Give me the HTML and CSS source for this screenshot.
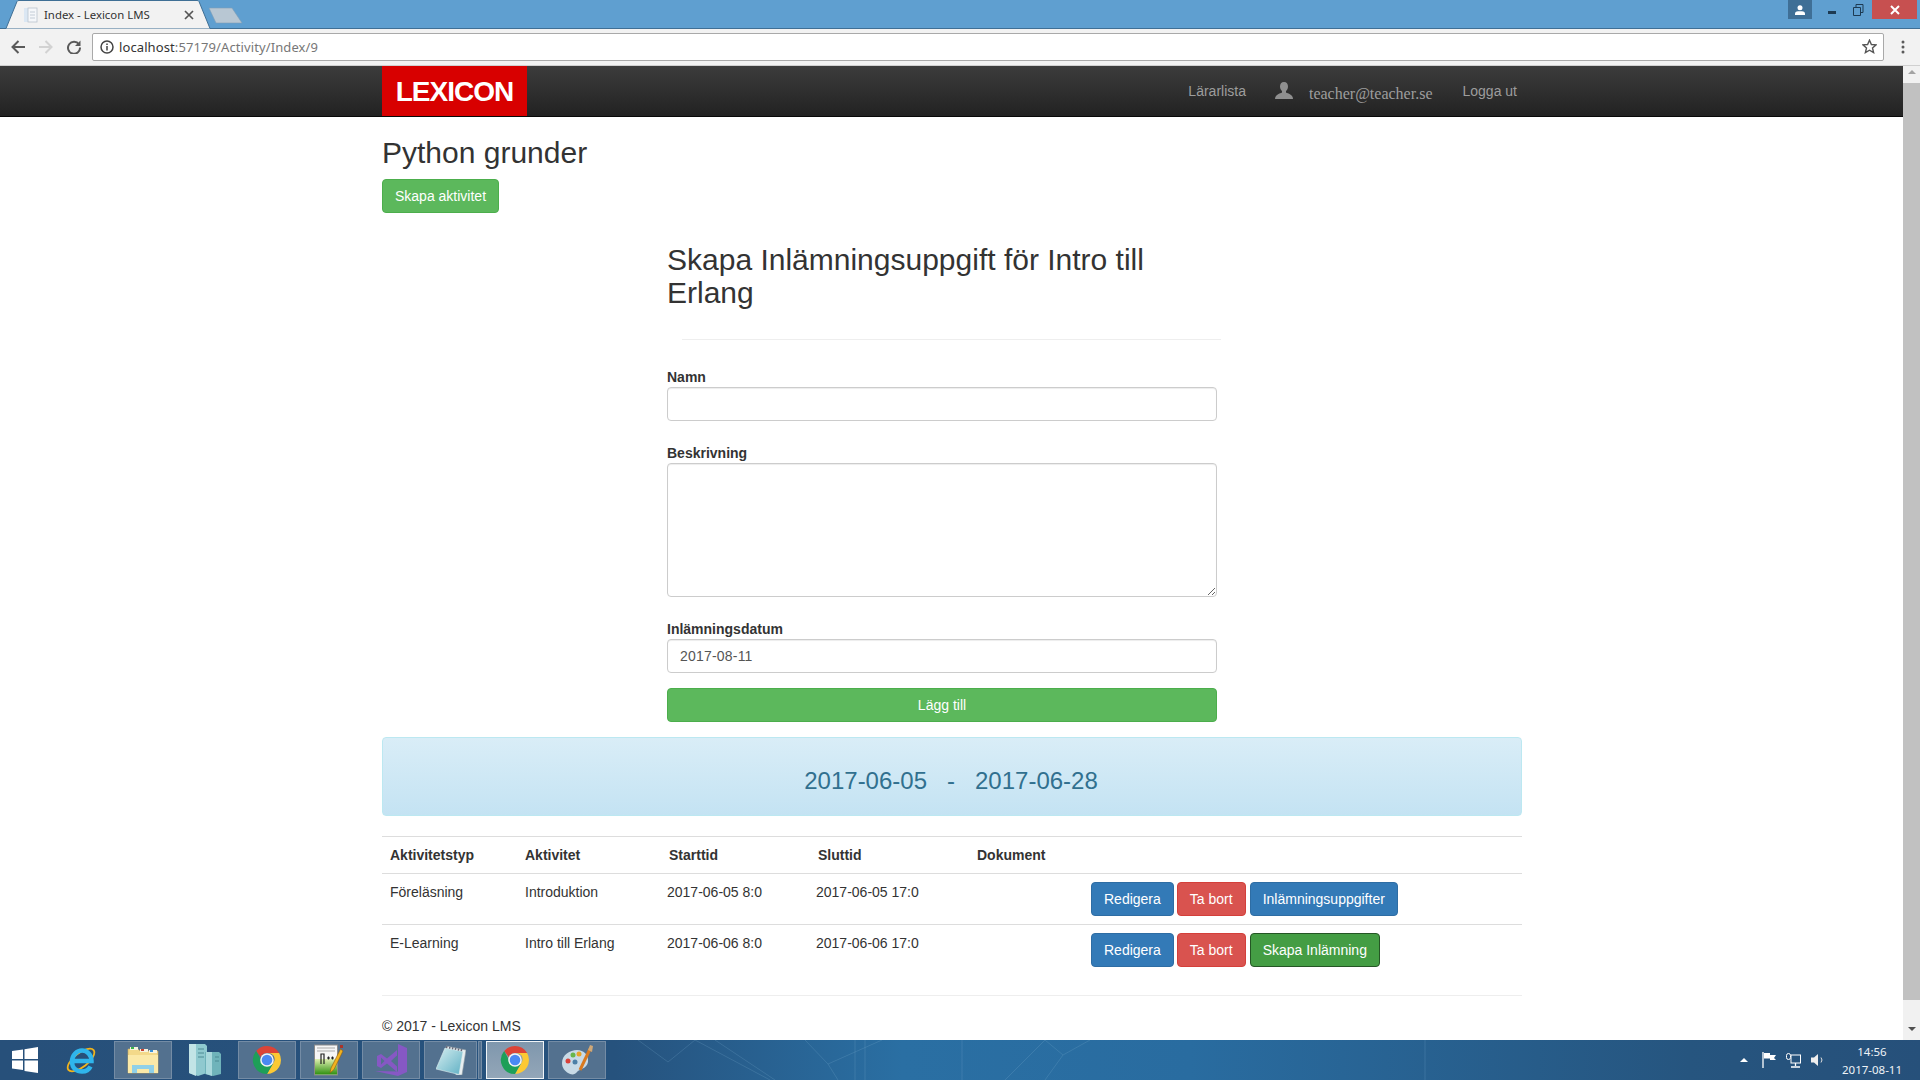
FILE: index.html
```html
<!DOCTYPE html>
<html lang="en">
<head>
    <meta charset="UTF-8">
    <title>Index - Lexicon LMS</title>
    <link rel="stylesheet" href="styles.css">
</head>
<body>
    <svg class="icon-defs" width="0" height="0">
        <defs>
            <linearGradient id="npp-green" x1="0" y1="0" x2="0" y2="1">
                <stop offset="0" stop-color="#dff0b0"/>
                <stop offset="1" stop-color="#2f9010"/>
            </linearGradient>
            <linearGradient id="pad-blue" x1="0" y1="0" x2="1" y2="1">
                <stop offset="0" stop-color="#d6eef0"/>
                <stop offset="1" stop-color="#5fb0c4"/>
            </linearGradient>
        </defs>
        <symbol id="chrome" viewBox="0 0 30 30">
            <path d="M15 1a14 14 0 0 1 12.100 7H15a7 7 0 0 0-6.300 4L4.200 6A14 14 0 0 1 15 1z" fill="#dc4437"/>
            <path d="M27.100 8A14 14 0 0 1 15 29l6-10.500A7 7 0 0 0 21.500 10.500 7 7 0 0 0 15 8z" fill="#fcc934"/>
            <path d="M4.200 6l6.200 11.500A7 7 0 0 0 21 18.500L15 29A14 14 0 0 1 4.200 6z" fill="#1e9f58"/>
            <circle cx="15" cy="15" r="6.800" fill="#f4f4f4"/>
            <circle cx="15" cy="15" r="5.300" fill="#4a89f3"/>
        </symbol>
    </svg>

    <div class="tabstrip">
        <div class="tab">
            <svg class="tab-shape" width="250" height="29" viewBox="0 0 250 29">
                <path d="M6 28.500L17 1.500Q17.500 .5 19 .5H197Q198.500 .5 199 1.500L210 28.500" fill="#f2f2f2" stroke="#3f6f95"/>
                <path d="M209 8H232L242 23H216z" fill="#b8c7d3" stroke="#7f9db6" stroke-width=".6"/>
            </svg>
            <svg class="tab-favicon" width="14" height="16" viewBox="0 0 14 16">
                <rect x="0" y="1" width="5" height="14" fill="#dbe7f3"/>
                <rect x="4" y="1" width="9" height="14" fill="#f5f7fa" stroke="#b9c3cd" stroke-width=".8"/>
                <path d="M6 5h5M6 8h5M6 11h5" stroke="#c3ccd6"/>
            </svg>
            <span class="tab-title">Index - Lexicon LMS</span>
            <svg class="tab-close" width="10" height="10" viewBox="0 0 10 10">
                <path d="M1 1l8 8M9 1l-8 8" stroke="#555" stroke-width="1.700"/>
            </svg>
        </div>
        <div class="window-controls">
            <div class="profile-btn">
                <svg width="10" height="10" viewBox="0 0 10 10"><circle cx="5" cy="2.800" r="2.500" fill="#fff"/><path d="M0 10V8.500Q0 6.500 3 6.200H7Q10 6.500 10 8.500V10z" fill="#fff"/></svg>
            </div>
            <svg class="win-btn" width="30" height="19" viewBox="0 0 30 19"><rect x="16" y="11" width="8" height="3" fill="#1d3a52"/></svg>
            <svg class="win-btn" width="30" height="19" viewBox="0 0 30 19"><path d="M11.500 7.500h7v8h-7zM14 7V4.500h7v8h-2" fill="none" stroke="#1d3a52"/></svg>
            <div class="close-btn">
                <svg width="10" height="10" viewBox="0 0 10 10"><path d="M1 1l8 8M9 1l-8 8" stroke="#fff" stroke-width="2"/></svg>
            </div>
        </div>
    </div>

    <div class="toolbar">
        <svg class="tool-icon" width="14" height="14" viewBox="0 0 14 14"><path d="M14 7H2M7.500 1L1.500 7l6 6" fill="none" stroke="#5a5a5a" stroke-width="2"/></svg>
        <svg class="tool-icon" width="14" height="14" viewBox="0 0 14 14"><path d="M0 7h12M6.500 1l6 6-6 6" fill="none" stroke="#d2d2d2" stroke-width="2"/></svg>
        <svg class="tool-icon" width="14" height="14" viewBox="0 0 14 14"><path d="M12 4.500A6 6 0 1 0 13 7.500" fill="none" stroke="#5a5a5a" stroke-width="2"/><path d="M13.500 .5V6H8z" fill="#5a5a5a"/></svg>
        <div class="address-bar">
            <svg class="info-icon" width="14" height="14" viewBox="0 0 14 14"><circle cx="7" cy="7" r="6" fill="none" stroke="#444" stroke-width="1.500"/><path d="M7 6v4.500M7 3.500v1.500" stroke="#444" stroke-width="1.500"/></svg>
            <span class="url"><span class="url-host">localhost</span>:57179/Activity/Index/9</span>
            <svg class="star-icon" width="15" height="15" viewBox="0 0 15 15"><path d="M7.500 1.200l1.900 4.300 4.700.4-3.600 3.100 1.100 4.600-4.100-2.400-4.100 2.400 1.100-4.600L.9 5.900l4.700-.4z" fill="none" stroke="#555" stroke-width="1.400"/></svg>
        </div>
        <svg class="menu-icon" width="4" height="14" viewBox="0 0 4 14"><circle cx="2" cy="2" r="1.500" fill="#5a5a5a"/><circle cx="2" cy="7" r="1.500" fill="#5a5a5a"/><circle cx="2" cy="12" r="1.500" fill="#5a5a5a"/></svg>
    </div>

    <div class="browser-view">
        <div class="site">
            <div class="navbar">
                <div class="logo">LEXICON</div>
                <div class="nav-links">
                    <a class="nav-link">Lärarlista</a>
                    <svg class="nav-user" width="18" height="17" viewBox="0 0 18 17"><path d="M9 0c2.700 0 4 2 4 4.500 0 2-1 3.700-2 4.500v1.500c2 1 7 2 7 6.500H0c0-4.500 5-5.500 7-6.500V9C6 8.200 5 6.500 5 4.500 5 2 6.300 0 9 0z" fill="#8f8f8f"/></svg>
                    <a class="nav-email">teacher@teacher.se</a>
                    <a class="nav-link">Logga ut</a>
                </div>
            </div>

            <div class="container">
                <h2 class="page-title">Python grunder</h2>
                <a class="btn btn-success">Skapa aktivitet</a>

                <div class="assignment-form">
                    <h2 class="form-title">Skapa Inlämningsuppgift för Intro till Erlang</h2>
                    <hr class="form-rule">
                    <div class="form-group">
                        <label>Namn</label>
                        <input class="form-control" type="text">
                    </div>
                    <div class="form-group">
                        <label>Beskrivning</label>
                        <textarea class="form-control description"></textarea>
                    </div>
                    <div class="form-group">
                        <label>Inlämningsdatum</label>
                        <input class="form-control date-input" type="text" value="2017-08-11">
                    </div>
                    <a class="btn btn-success btn-block">Lägg till</a>
                </div>

                <div class="period-banner">2017-06-05 &nbsp; - &nbsp; 2017-06-28</div>

                <table class="activity-table">
                    <colgroup>
                        <col class="col-type">
                        <col class="col-name">
                        <col class="col-start">
                        <col class="col-end">
                        <col class="col-doc">
                        <col>
                    </colgroup>
                    <thead>
                        <tr>
                            <th>Aktivitetstyp</th>
                            <th>Aktivitet</th>
                            <th>Starttid</th>
                            <th>Sluttid</th>
                            <th>Dokument</th>
                            <th></th>
                        </tr>
                    </thead>
                    <tbody>
                        <tr>
                            <td>Föreläsning</td>
                            <td>Introduktion</td>
                            <td class="time-cell">2017-06-05 8:0</td>
                            <td class="time-cell">2017-06-05 17:0</td>
                            <td></td>
                            <td>
                                <div class="row-actions">
                                    <a class="btn btn-primary">Redigera</a>
                                    <a class="btn btn-danger">Ta bort</a>
                                    <a class="btn btn-primary">Inlämningsuppgifter</a>
                                </div>
                            </td>
                        </tr>
                        <tr>
                            <td>E-Learning</td>
                            <td>Intro till Erlang</td>
                            <td class="time-cell">2017-06-06 8:0</td>
                            <td class="time-cell">2017-06-06 17:0</td>
                            <td></td>
                            <td>
                                <div class="row-actions">
                                    <a class="btn btn-primary">Redigera</a>
                                    <a class="btn btn-danger">Ta bort</a>
                                    <a class="btn btn-success-active">Skapa Inlämning</a>
                                </div>
                            </td>
                        </tr>
                    </tbody>
                </table>

                <hr class="footer-rule">
                <p class="footer-text">© 2017 - Lexicon LMS</p>
            </div>
        </div>

        <div class="scrollbar">
            <div class="arrow-up"></div>
            <div class="scroll-thumb"></div>
            <div class="arrow-down"></div>
        </div>
    </div>

    <div class="taskbar">
        <svg class="taskbar-art" width="1000" height="40" viewBox="0 0 1000 40">
            <g fill="none" stroke="#7fb3d3" stroke-opacity=".22">
                <path d="M18 0L48 22 75 0M75 0L150 40M95 0L155 40M185 0L208 24 262 0M208 24L218 40M235 0V40M245 0V40M342 0V40"/>
                <path d="M425 0L443 15 470 0M425 40L443 15M385 40L425 0M805 0V40"/>
            </g>
        </svg>
        <div class="start-btn">
            <svg width="28" height="26" viewBox="0 0 28 26"><path d="M1 4l11-1.600V12H1zM13.500 2.200L27 0v12H13.500zM1 13.500h11v9.600L1 21.500zM13.500 13.500H27V26l-13.500-2z" fill="#fff"/></svg>
        </div>
        <div class="task-item no-tile">
            <svg width="32" height="32" viewBox="0 0 32 32">
                <ellipse cx="16" cy="16" rx="16" ry="7" transform="rotate(-38 16 16)" fill="none" stroke="#f2b41b" stroke-width="1.800"/>
                <path d="M7.500 17h19c0-6.500-4.500-10.500-9.500-10.500S7 11 7 17.500 11.500 27.500 17 27.500c4 0 7-1.800 8.500-5" fill="none" stroke="#2fb5ec" stroke-width="4.500"/>
            </svg>
        </div>
        <div class="task-item">
            <svg width="32" height="28" viewBox="0 0 32 28">
                <path d="M1 3h10l2 2h18v22H1z" fill="#f3d98a" stroke="#c9a85a" stroke-width=".6"/>
                <rect x="3" y="1" width="8" height="3" fill="#f7f3df"/><rect x="4" y="1" width="3" height="2" fill="#3cb54a"/>
                <rect x="13" y="3" width="8" height="3" fill="#f7f3df"/><rect x="14" y="3" width="3" height="2" fill="#c9402f"/>
                <rect x="22" y="4" width="8" height="3" fill="#f7f3df"/><rect x="23" y="4" width="3" height="2" fill="#3a91d6"/>
                <rect x="1" y="9" width="30" height="18" fill="#fbe9a8"/>
                <path d="M5 27V19h22v8h-5v-4H10v4z" fill="#8fd0e8"/>
            </svg>
        </div>
        <div class="task-item no-tile">
            <svg width="32" height="34" viewBox="0 0 32 34">
                <path d="M0 1h16l2 2v27l-9 3-9-3z" fill="#8fc9cf"/>
                <path d="M0 1h7v32l-7-3z" fill="#c2e4e6"/>
                <path d="M16 9h14l2 2v20l-8 2-8-2z" fill="#6fb3ba"/>
                <path d="M17 9h6v24l-6-2z" fill="#a9d8dc"/>
                <path d="M9 6h6M9 10h6M9 14h6M26 14h4M26 18h4" stroke="#4d8b94"/>
            </svg>
        </div>
        <div class="task-item">
            <svg width="30" height="30" viewBox="0 0 30 30"><use href="#chrome"/></svg>
        </div>
        <div class="task-item">
            <svg width="30" height="32" viewBox="0 0 30 32">
                <rect x=".5" y="1" width="23" height="30" fill="#f6f6f6" stroke="#8a8a8a"/>
                <rect x="1" y="15" width="22" height="15.500" fill="url(#npp-green)"/>
                <path d="M3 4h18M3 7h18" stroke="#aaa"/>
                <path d="M7 20V10h3v10M13 14h3M14.500 12.500v3M17 14h3M18.500 12.500v3" fill="none" stroke="#222" stroke-width="1.200"/>
                <path d="M26.500 5L17 24l-1 5 4-3.500L29 7z" fill="#f2b21f" stroke="#8a5a10" stroke-width=".6"/>
                <rect x="26" y="1" width="3" height="3" fill="#a8342a"/>
            </svg>
        </div>
        <div class="task-item">
            <svg width="32" height="32" viewBox="0 0 32 32">
                <path d="M23 0l9 4v24l-9 4L0 27l23 .5V0z" fill="#8658c4"/>
                <path d="M22 6L12 14.500 6 10 2 12v10l4 2 6-4.500L22 28zM6 13.500v7l3.500-3.500zM22 11.500L16 17l6 5.500z" fill="#8658c4" fill-rule="evenodd"/>
            </svg>
        </div>
        <div class="task-group">
            <div class="task-item narrow">
                <svg width="30" height="30" viewBox="0 0 30 30">
                    <path d="M10 1l20 4-4 25-6 0z" fill="#e8eef0" stroke="#8c9aa3" stroke-width=".6"/>
                    <path d="M9 3l18 3.500-4 23L0 24z" fill="url(#pad-blue)" stroke="#dfeef0" stroke-width=".6"/>
                    <path d="M10 2l17 3.500" stroke="#667" stroke-dasharray="1.500 1.500" stroke-width="2"/>
                </svg>
            </div>
            <div class="task-sliver"></div>
        </div>
        <div class="task-item active">
            <svg width="30" height="30" viewBox="0 0 30 30"><use href="#chrome"/></svg>
        </div>
        <div class="task-item">
            <svg width="32" height="32" viewBox="0 0 32 32">
                <path d="M1 19c0-8 8-13 15-13s12 5 11 12-9 7-11 10-6 3-9 1-6-5-6-10z" fill="#c8dae6"/>
                <circle cx="7" cy="17" r="2.500" fill="#d9413a"/>
                <circle cx="12" cy="11" r="2.500" fill="#68b64a"/>
                <circle cx="18" cy="10" r="2.500" fill="#e8a32a"/>
                <circle cx="14" cy="18" r="2.500" fill="#4c7fa6"/>
                <path d="M19 26L29 5" stroke="#d9791f" stroke-width="3"/>
                <path d="M27 6l2-5 3 1-1 6z" fill="#cfa878"/>
            </svg>
        </div>
        <div class="tray">
            <svg class="tray-up" width="8" height="4" viewBox="0 0 8 4"><path d="M0 4L4 0l4 4z" fill="#fff"/></svg>
            <svg class="tray-flag" width="15" height="16" viewBox="0 0 15 16"><path d="M1 0v16" stroke="#fff" stroke-width="1.300"/><path d="M2 1h6v2h6l-2 3 2 2H8V6.500H2z" fill="#fff"/></svg>
            <svg width="15" height="15" viewBox="0 0 15 15"><rect x="5" y="2" width="9.500" height="8" fill="none" stroke="#fff"/><rect x=".5" y=".5" width="4" height="6" rx="2" fill="#27507a" stroke="#fff"/><path d="M9.500 10v3M5 14h9" stroke="#fff" stroke-width="1.300"/></svg>
            <svg width="13" height="14" viewBox="0 0 13 14"><path d="M0 4.500h3L7 1v12L3 9.500H0z" fill="#eee"/><path d="M10 4.500q2 2.500 0 5" fill="none" stroke="#ddd"/></svg>
            <div class="clock">
                <span>14:56</span>
                <span>2017-08-11</span>
            </div>
        </div>
    </div>
</body>
</html>
```

FILE: styles.css
```css
* {
    box-sizing: border-box;
}
html, body {
    margin: 0;
    height: 1080px;
    overflow: hidden;
}
body {
    display: flex;
    flex-direction: column;
    font-family: "Liberation Sans", Arial, sans-serif;
    font-size: 14px;
    line-height: 20px;
    color: #333;
    background-color: white;
}
.icon-defs {
    position: absolute;
}

/* browser chrome */
.tabstrip {
    display: flex;
    height: 29px;
    flex-shrink: 0;
    background-color: #5f9fd0;
    border-bottom: 1px solid #3f6f95;
}
.tab {
    position: relative;
    display: flex;
    align-items: center;
    width: 208px;
    height: 29px;
    padding-left: 24px;
    font-family: "Noto Sans", sans-serif;
    font-size: 11.4px;
    color: #333;
}
.tab-shape {
    position: absolute;
    left: 0;
    top: 0;
}
.tab-favicon, .tab-title, .tab-close {
    position: relative;
}
.tab-title {
    margin-left: 6px;
    width: 135px;
    white-space: nowrap;
}
.tab-close {
    margin-left: 5px;
}
.window-controls {
    display: flex;
    align-items: flex-start;
    margin-left: auto;
    padding-right: 3px;
}
.profile-btn, .close-btn {
    display: flex;
    align-items: center;
    justify-content: center;
    height: 19px;
}
.profile-btn {
    width: 24px;
    background-color: #3f6f96;
}
.close-btn {
    width: 45px;
    background-color: #c75050;
}
.win-btn {
    display: block;
}
.toolbar {
    display: flex;
    align-items: center;
    height: 37px;
    flex-shrink: 0;
    padding-left: 11px;
    padding-bottom: 1px;
    gap: 14px;
    background-color: #f2f2f2;
    border-bottom: 1px solid #d0d0d0;
}
.address-bar {
    display: flex;
    align-items: center;
    width: 1792px;
    height: 28px;
    margin-left: -3px;
    padding: 0 6px 0 7px;
    background-color: white;
    border: 1px solid #a9a9a9;
    border-radius: 2px;
    font-family: "Noto Sans", sans-serif;
    font-size: 13px;
    letter-spacing: .1px;
    color: #777;
}
.url {
    margin-left: 5px;
    white-space: nowrap;
}
.url-host {
    color: #333;
}
.star-icon {
    margin-left: auto;
}
.menu-icon {
    margin-left: 3px;
}
.browser-view {
    display: flex;
    flex: 1;
    min-height: 0;
}
.site {
    flex: 1;
    min-width: 0;
    overflow: hidden;
}
.scrollbar {
    display: flex;
    flex-direction: column;
    align-items: center;
    width: 17px;
    background-color: #f1f1f1;
}
.scroll-thumb {
    width: 17px;
    height: 917px;
    margin-top: 9px;
    background-color: #c1c1c1;
}
.arrow-up, .arrow-down {
    width: 0;
    height: 0;
    border-left: 4px solid transparent;
    border-right: 4px solid transparent;
}
.arrow-up {
    margin-top: 4px;
    border-bottom: 4px solid #a3a3a3;
}
.arrow-down {
    margin-top: 27px;
    border-top: 4px solid #505050;
}

/* site */
.navbar {
    display: flex;
    justify-content: space-between;
    height: 51px;
    padding: 0 386px 0 382px;
    background-image: linear-gradient(to bottom, #3c3c3c, #222);
    border-bottom: 1px solid #080808;
}
.logo {
    width: 145px;
    height: 50px;
    background-color: #d80000;
    color: white;
    font-size: 28px;
    font-weight: bold;
    line-height: 51px;
    letter-spacing: -1px;
    text-align: center;
}
.nav-links {
    display: flex;
    align-items: center;
    color: #9d9d9d;
}
.nav-user {
    margin-left: 29px;
    margin-top: -2px;
}
.nav-email {
    margin: 5px 30px 0 16px;
    font-family: "Liberation Serif", serif;
    font-size: 16px;
}
.container {
    width: 1140px;
    margin-left: 382px;
}
.page-title {
    margin: 19px 0 10px;
    font-size: 30px;
    font-weight: normal;
    line-height: 33px;
}
.btn {
    display: inline-block;
    padding: 6px 12px;
    color: white;
    font-size: 14px;
    line-height: 20px;
    text-align: center;
    white-space: nowrap;
    border: 1px solid transparent;
    border-radius: 4px;
}
.btn-success {
    background-color: #5cb85c;
    border-color: #4cae4c;
}
.btn-success-active {
    display: inline-block;
    padding: 6px 12px;
    color: white;
    white-space: nowrap;
    background-color: #449d44;
    border: 1px solid #255625;
    border-radius: 4px;
}
.btn-primary {
    background-color: #337ab7;
    border-color: #2e6da4;
}
.btn-danger {
    background-color: #d9534f;
    border-color: #d43f3a;
}
.btn-block {
    display: block;
}
.assignment-form {
    width: 550px;
    margin: 30px 0 15px 285px;
}
.form-title {
    margin: 0;
    font-size: 30px;
    font-weight: normal;
    line-height: 33px;
}
.form-rule {
    width: 539px;
    margin: 30px 0 27px 15px;
    border: 0;
    border-top: 1px solid #eee;
}
.form-group {
    margin-bottom: 22px;
}
.form-group:last-of-type {
    margin-bottom: 15px;
}
.form-group label {
    display: block;
    font-weight: bold;
}
.form-control {
    display: block;
    width: 100%;
    height: 34px;
    padding: 6px 12px;
    color: #555;
    font-family: inherit;
    font-size: 14px;
    background-color: white;
    border: 1px solid #ccc;
    border-radius: 4px;
    box-shadow: inset 0 1px 1px rgba(0,0,0,0.075);
}
.description {
    height: 134px;
}
.date-input {
    letter-spacing: .2px;
}
.period-banner {
    height: 79px;
    padding: 30px 2px 0 0;
    color: #31708f;
    font-size: 24px;
    line-height: 26px;
    text-align: center;
    background-image: linear-gradient(to bottom, #d9edf7, #c4e3f3);
    border: 1px solid #bce8f1;
    border-radius: 4px;
}
.activity-table {
    width: 100%;
    margin-top: 20px;
    table-layout: fixed;
    border-collapse: separate;
    border-spacing: 0;
    border-top: 1px solid #ddd;
}
.col-type { width: 135px; }
.col-name { width: 144px; }
.col-start { width: 149px; }
.col-end { width: 159px; }
.col-doc { width: 114px; }
.activity-table th, .activity-table td {
    padding: 8px;
    text-align: left;
    vertical-align: top;
}
.activity-table th {
    height: 36px;
    border-bottom: 1px solid #ddd;
}
.activity-table tbody tr:first-child td {
    border-bottom: 1px solid #ddd;
}
.activity-table .time-cell {
    padding-left: 6px;
}
.row-actions {
    display: flex;
    gap: 4px;
}
.row-actions .btn:first-child {
    margin-right: -1px;
}
.footer-rule {
    margin: 20px 0;
    border: 0;
    border-top: 1px solid #eee;
}
.footer-text {
    margin: 0;
}

/* taskbar */
.taskbar {
    position: relative;
    display: flex;
    flex-shrink: 0;
    align-items: center;
    height: 40px;
    gap: 4px;
    overflow: hidden;
    background-image: linear-gradient(to right, #27507a 0, #26527d 32%, #2a6fa3 47%, #296ca0 62%, #26557f 88%, #26507a 100%);
}
.taskbar-art {
    position: absolute;
    left: 620px;
    top: 0;
}
.start-btn {
    display: flex;
    align-items: center;
    justify-content: center;
    position: relative;
    width: 48px;
    height: 40px;
    padding-left: 1px;
}
.task-item {
    position: relative;
    display: flex;
    align-items: center;
    justify-content: center;
    width: 58px;
    height: 38px;
    background-color: #53718f;
    border: 1px solid #748ca5;
}
.task-item.no-tile {
    background-color: transparent;
    border-color: transparent;
}
.task-item.narrow {
    width: 53px;
}
.task-item.active {
    background-image: linear-gradient(to bottom, #7f97ad, #93a6b8);
    border-color: #f0f4f7;
}
.task-group {
    position: relative;
    display: flex;
    gap: 1px;
}
.task-sliver {
    width: 4px;
    height: 38px;
    background-color: #53718f;
    border: 1px solid #748ca5;
}
.tray {
    position: relative;
    display: flex;
    align-items: center;
    margin-left: auto;
    height: 40px;
    gap: 10px;
    color: #eef3f7;
    font-family: "Noto Sans", sans-serif;
    font-size: 11.500px;
    line-height: 18px;
}
.tray-up {
    margin-right: 4px;
}
.tray-flag {
    margin-right: -1px;
}
.clock {
    display: flex;
    flex-direction: column;
    align-items: center;
    width: 96px;
    margin-left: -10px;
    padding-top: 2px;
}
```
